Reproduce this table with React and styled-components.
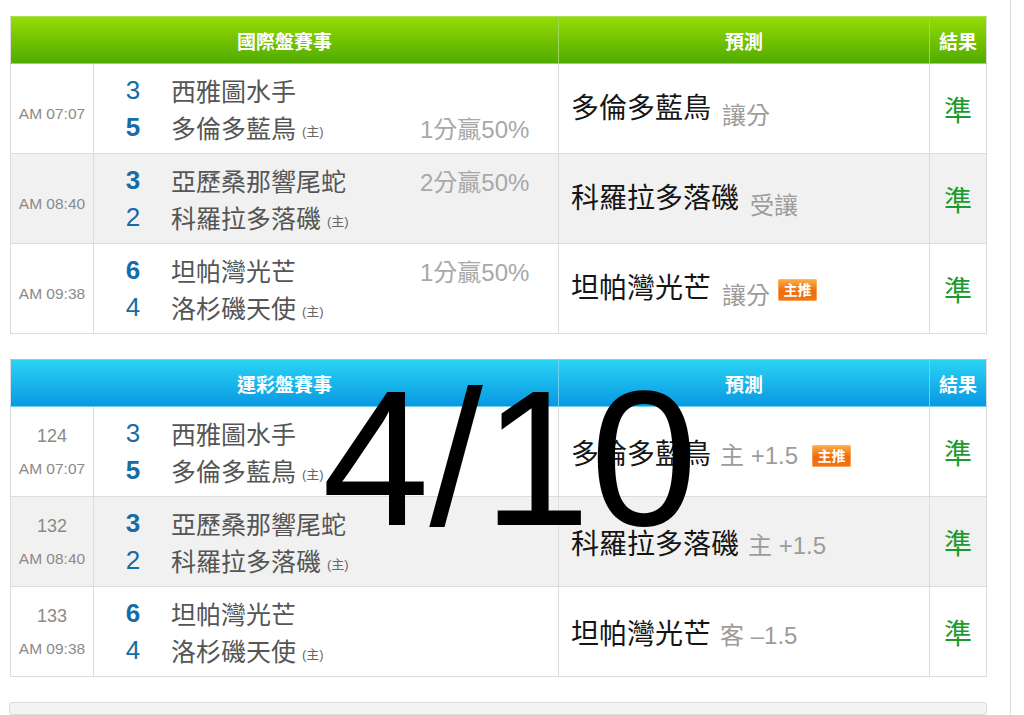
import React from "react";
import styled, { createGlobalStyle, css } from "styled-components";

const Global = createGlobalStyle`
  html, body { margin: 0; padding: 0; background: #fff; }
  body {
    font-family: "Liberation Sans", "Noto Sans CJK TC", sans-serif;
    color: #555;
  }
`;

const Page = styled.div`
  position: relative;
  width: 1011px;
  height: 715px;
  overflow: hidden;
  box-sizing: border-box;
  border-right: 1px solid #dcdcdc;
  padding: 16px 0 0 10px;
  display: flex;
  flex-direction: column;
  gap: 25px;
`;

const themes = {
  green: {
    top: "#97db05",
    bottom: "#4eaa00",
    edge: "#a6e24e",
    sep: "#9bd85a",
  },
  blue: {
    top: "#2ad3f5",
    bottom: "#0897e1",
    edge: "#5fe0f8",
    sep: "#6cd0f3",
  },
};

const Table = styled.table`
  width: 976px;
  table-layout: fixed;
  border-collapse: collapse;
  border: 1px solid #dcdcdc;
`;

const HeadRow = styled.tr`
  background: linear-gradient(
    to bottom,
    ${(p) => themes[p.$theme].top},
    ${(p) => themes[p.$theme].bottom}
  );
`;

const Th = styled.th`
  height: 46px;
  padding: 0;
  color: #fff;
  font-size: 19px;
  font-weight: bold;
  text-align: center;
  border-top: 1px solid ${(p) => themes[p.$theme].edge};
  border-left: 1px solid ${(p) => themes[p.$theme].sep};
  border-right: 1px solid ${(p) => themes[p.$theme].sep};
  border-bottom: 1px solid ${(p) => themes[p.$theme].sep};
  &:first-child { border-left: none; }
  &:last-child { border-right: none; }
`;

const Row = styled.tr`
  background: ${(p) => (p.$alt ? "#f1f1f1" : "#fff")};
`;

const Td = styled.td`
  height: 89px;
  padding: 0;
  border: 1px solid #dcdcdc;
  vertical-align: middle;
`;

const TimeCell = styled(Td)`
  text-align: center;
  color: #8a8a8a;
`;

const TimeStack = styled.div`
  display: flex;
  flex-direction: column;
  align-items: center;
  gap: 11px;
  padding-top: ${(p) => (p.$shift ? "10px" : "0")};
`;

const GameNo = styled.div`
  font-size: 18px;
  line-height: 24px;
`;

const Clock = styled.div`
  font-size: 15.5px;
  line-height: 20px;
`;

const TeamsGrid = styled.div`
  display: grid;
  grid-template-columns: 26px 224px auto;
  grid-auto-rows: 37px;
  column-gap: 25px;
  align-items: center;
  padding-left: 26px;
`;

const Score = styled.div`
  text-align: center;
  font-size: 26px;
  color: #156ca6;
  font-weight: ${(p) => (p.$win ? "bold" : "normal")};
`;

const TeamName = styled.div`
  font-size: 25px;
  color: #555;
  white-space: nowrap;
`;

const HomeTag = styled.span`
  font-size: 13px;
  color: #666;
  margin-left: 6px;
  vertical-align: 2px;
`;

const Pct = styled.div`
  font-size: 24px;
  color: #a8a8a8;
  white-space: nowrap;
`;

const PredCell = styled(Td)`
  padding-left: 12px;
  white-space: nowrap;
`;

const PredMain = styled.span`
  font-size: 28px;
  color: #151515;
`;

const PredSuffix = styled.span`
  font-size: 24px;
  color: #9c9c9c;
  margin-left: ${(p) => (p.$drop ? "11px" : "9px")};
  ${(p) =>
    p.$drop &&
    css`
      vertical-align: -6px;
    `}
`;

const Badge = styled.span`
  display: inline-block;
  vertical-align: 3px;
  margin-left: ${(p) => (p.$drop ? "8px" : "14px")};
  width: 39px;
  height: 22px;
  line-height: 22px;
  border-radius: 2px;
  text-align: center;
  font-size: 14px;
  font-weight: bold;
  color: #fff;
  background: linear-gradient(to bottom, #fbb04a, #ec6a10 55%, #f0781c);
  box-shadow: inset 0 0 0 1px rgba(255, 190, 120, 0.6);
`;

const ResultCell = styled(Td)`
  text-align: center;
  font-size: 28px;
  color: #1c9a2d;
`;

const BottomBox = styled.div`
  width: 976px;
  height: 40px;
  margin-left: -1px;
  border: 1px solid #dcdcdc;
  border-radius: 3px;
  background: #f4f4f4;
`;

const Overlay = styled.div`
  position: absolute;
  left: 322px;
  top: 362px;
  font-family: "Liberation Sans", sans-serif;
  font-size: 193px;
  line-height: 1;
  color: #000;
  z-index: 5;
  pointer-events: none;
`;

const games = [
  {
    no: "124",
    time: "AM 07:07",
    teams: [
      { n: 3, name: "西雅圖水手" },
      { n: 5, name: "多倫多藍鳥", home: true, win: true },
    ],
    pct: { line: 1, text: "1分贏50%" },
  },
  {
    no: "132",
    time: "AM 08:40",
    teams: [
      { n: 3, name: "亞歷桑那響尾蛇", win: true },
      { n: 2, name: "科羅拉多落磯", home: true },
    ],
    pct: { line: 0, text: "2分贏50%" },
  },
  {
    no: "133",
    time: "AM 09:38",
    teams: [
      { n: 6, name: "坦帕灣光芒", win: true },
      { n: 4, name: "洛杉磯天使", home: true },
    ],
    pct: { line: 0, text: "1分贏50%" },
  },
];

const tables = [
  {
    theme: "green",
    title: "國際盤賽事",
    showNo: false,
    showPct: true,
    drop: true,
    preds: [
      { main: "多倫多藍鳥", suffix: "讓分" },
      { main: "科羅拉多落磯", suffix: "受讓" },
      { main: "坦帕灣光芒", suffix: "讓分", badge: true },
    ],
  },
  {
    theme: "blue",
    title: "運彩盤賽事",
    showNo: true,
    showPct: false,
    drop: false,
    preds: [
      { main: "多倫多藍鳥", suffix: "主 +1.5", badge: true },
      { main: "科羅拉多落磯", suffix: "主 +1.5" },
      { main: "坦帕灣光芒", suffix: "客 –1.5" },
    ],
  },
];

function Teams({ game, showPct }) {
  return (
    <TeamsGrid>
      {game.teams.map((t, i) => (
        <React.Fragment key={i}>
          <Score $win={t.win}>{t.n}</Score>
          <TeamName>
            {t.name}
            {t.home && <HomeTag>(主)</HomeTag>}
          </TeamName>
          <Pct>{showPct && game.pct.line === i ? game.pct.text : ""}</Pct>
        </React.Fragment>
      ))}
    </TeamsGrid>
  );
}

function GameTable({ cfg }) {
  return (
    <Table>
      <colgroup>
        <col style={{ width: 83 }} />
        <col style={{ width: 465 }} />
        <col style={{ width: 371 }} />
        <col style={{ width: 57 }} />
      </colgroup>
      <thead>
        <HeadRow $theme={cfg.theme}>
          <Th $theme={cfg.theme} colSpan={2}>
            {cfg.title}
          </Th>
          <Th $theme={cfg.theme}>預測</Th>
          <Th $theme={cfg.theme}>結果</Th>
        </HeadRow>
      </thead>
      <tbody>
        {games.map((g, i) => {
          const p = cfg.preds[i];
          return (
            <Row key={i} $alt={i === 1}>
              <TimeCell>
                <TimeStack $shift={!cfg.showNo}>
                  {cfg.showNo && <GameNo>{g.no}</GameNo>}
                  <Clock>{g.time}</Clock>
                </TimeStack>
              </TimeCell>
              <Td>
                <Teams game={g} showPct={cfg.showPct} />
              </Td>
              <PredCell>
                <PredMain>{p.main}</PredMain>
                <PredSuffix $drop={cfg.drop}>{p.suffix}</PredSuffix>
                {p.badge && <Badge $drop={cfg.drop}>主推</Badge>}
              </PredCell>
              <ResultCell>準</ResultCell>
            </Row>
          );
        })}
      </tbody>
    </Table>
  );
}

export default function App() {
  return (
    <>
      <Global />
      <Page>
        {tables.map((t) => (
          <GameTable key={t.theme} cfg={t} />
        ))}
        <BottomBox />
        <Overlay>4/10</Overlay>
      </Page>
    </>
  );
}
